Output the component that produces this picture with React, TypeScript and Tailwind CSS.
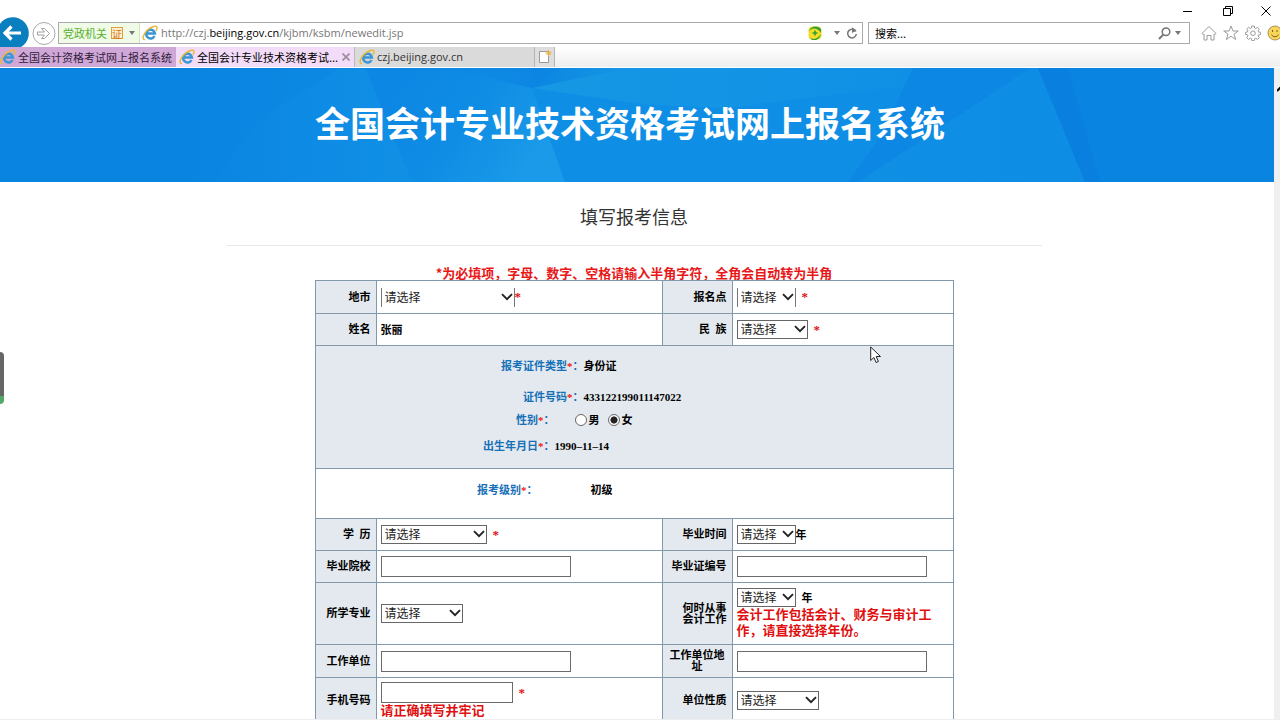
import type { ReactNode } from "react";

function IeIcon() {
  return (
    <svg viewBox="0 0 16 16" className="size-4 shrink-0" aria-hidden="true">
      <path d="M12.500 11A4.400 4.400 0 1 1 12.900 8.400H5" fill="none" stroke="#3a97d4" strokeWidth="2.500" />
      <path
        d="M2.400 14.600C-.4 14 1.600 8.500 5.800 4.800 9.500 1.600 14.200 .1 14.900 2c.3.9 0 2-.6 3.100"
        fill="none"
        stroke="#e9b93a"
        strokeWidth="1.500"
        strokeLinecap="round"
      />
    </svg>
  );
}

function Caret() {
  return (
    <svg viewBox="0 0 6 4" className="h-1 w-1.5 shrink-0" aria-hidden="true">
      <path d="M0 0h6L3 4z" fill="#777" />
    </svg>
  );
}

function Star() {
  return <span className="text-[13px] text-[#e01010]">*</span>;
}

function Select({ id, label, width, open = false }: { id: string; label: string; width: string; open?: boolean }) {
  return (
    <span className={`relative inline-flex shrink-0 ${width}`}>
      <select
        id={id}
        aria-label={label}
        className={`h-[19px] w-full appearance-none bg-white pb-px pl-[3px] font-['Noto_Sans_CJK_SC',sans-serif] text-[12px] leading-4 font-normal text-[#222] outline-none ${
          open ? "border-x border-[#777]" : "border border-[#666]"
        }`}
      >
        <option>请选择</option>
      </select>
      <svg viewBox="0 0 12 8" className="pointer-events-none absolute top-[5px] right-[2px] h-2 w-3" aria-hidden="true">
        <path d="M1 1.200l5 5 5-5" fill="none" stroke="#222" strokeWidth="1.900" />
      </svg>
    </span>
  );
}

function TextBox({ id, width }: { id: string; width: string }) {
  return <input id={id} type="text" className={`block h-[21px] border border-[#6b6b6b] bg-white px-1 text-[12px] ${width}`} />;
}

function LabelCell({ children, htmlFor, className = "text-right" }: { children: ReactNode; htmlFor?: string; className?: string }) {
  return (
    <th scope="row" className={`border border-[#8299ac] bg-[#e3e9ee] pr-[5px] pl-[5px] font-bold ${className}`}>
      <label htmlFor={htmlFor} className="block leading-[11px]">
        {children}
      </label>
    </th>
  );
}

function Cell({ children }: { children: ReactNode }) {
  return <td className="border border-[#8299ac] bg-white pl-1">{children}</td>;
}

function InfoRow({ label, height, labelWidth, children }: { label: string; height: string; labelWidth: string; children: ReactNode }) {
  return (
    <div className={`flex items-center ${height}`}>
      <span className={`text-right text-[#1670b8] ${labelWidth}`}>
        {label}
        <span className="text-[#f01010]">*</span>：
      </span>
      {children}
    </div>
  );
}

function Chrome() {
  return (
    <header className="shrink-0 font-['Noto_Sans_CJK_SC',sans-serif] text-[11px]">
      <div className="flex h-[22px] items-center justify-end pr-2">
        <button aria-label="最小化" className="w-10">
          <svg viewBox="0 0 10 10" className="mx-auto size-2.5"><path d="M0 5.500h9" stroke="#000" /></svg>
        </button>
        <button aria-label="还原" className="w-10">
          <svg viewBox="0 0 10 10" className="mx-auto size-2.5"><path d="M.5 2.500h7v7h-7zM2.500 2.500v-2h7v7h-2" fill="none" stroke="#000" /></svg>
        </button>
        <button aria-label="关闭" className="flex w-6 justify-center pl-3">
          <svg viewBox="0 0 10 10" className="size-2.5 shrink-0"><path d="M.5.5l9 9M9.500.5l-9 9" stroke="#000" /></svg>
        </button>
      </div>
      <div className="flex h-[25px] items-start">
        <button aria-label="后退" className="h-[25px] w-[30px] shrink-0">
          <svg viewBox="0 0 30 25" className="h-[25px] w-[30px] overflow-visible">
            <path d="M0 1.700A16 16 0 1 1 21 25H0z" fill="#0a7fc0" />
            <path d="M21 11H6M11.500 4.500L5 11l6.500 6.500" fill="none" stroke="#fff" strokeWidth="3.200" />
          </svg>
        </button>
        <button aria-label="前进" className="ml-[2px] h-6 w-6 shrink-0">
          <svg viewBox="0 0 24 24" className="size-6">
            <circle cx="12" cy="11.500" r="11" fill="#fff" stroke="#a8a8a8" />
            <path d="M5.500 10h7L9.500 6.500h3l5 5-5 5h-3l3-3.500h-7z" fill="#fff" stroke="#a0a0a0" />
          </svg>
        </button>
        <div className="ml-[2px] flex h-[22px] flex-1 items-center border border-[#aaa] bg-white">
          <div className="flex h-full shrink-0 items-center border-r border-[#cde8bb] bg-[#effbe6] pl-1 text-[#5aae2c]">
            党政机关
            <span className="ml-1 flex size-3 items-center justify-center border border-[#e0a040] bg-[#fdf0d0] text-[10px] text-[#d47a10]">证</span>
            <span className="mr-1 ml-1.5"><Caret /></span>
          </div>
          <span className="mr-[3px] ml-0.5"><IeIcon /></span>
          <span
            role="textbox"
            aria-label="地址"
            contentEditable
            suppressContentEditableWarning
            spellCheck={false}
            className="flex-1 font-['Open_Sans','Noto_Sans',sans-serif] text-[#777] outline-none"
          >
            http://czj.<span className="text-black">beijing.gov.cn</span>/kjbm/ksbm/newedit.jsp
          </span>
          <svg viewBox="0 0 14 14" className="mr-3 size-3.5" aria-hidden="true">
            <rect x="0.5" y="0.5" width="13" height="13" rx="4" fill="#f3dd26" />
            <path d="M1 5C3 0 9-1 13 3v4C10 2 5 1 1 5zM1 11c3 3 8 3 12-3-1 5-5 7-9 6z" fill="#2f9e35" />
            <path d="M7 4.500v5M4.500 7h5" stroke="#2f9e35" strokeWidth="1.600" />
          </svg>
          <Caret />
          <svg viewBox="0 0 12 12" className="mr-1 ml-1.5 size-3" aria-hidden="true">
            <path d="M9.800 4.500A4.300 4.300 0 1 0 10.300 7" fill="none" stroke="#777" strokeWidth="1.500" />
            <path d="M6 .2V6l4.500-2.500z" fill="#777" />
          </svg>
        </div>
        <div className="ml-[5px] flex h-[22px] w-1/4 max-w-[322px] shrink-0 grow items-center border border-[#aaa] bg-white pr-2">
          <input
            type="text"
            aria-label="搜索"
            placeholder="搜索..."
            className="min-w-0 flex-1 pl-1.5 leading-5 outline-none placeholder:text-black"
          />
          <svg viewBox="0 0 13 13" className="mr-1 size-[13px]" aria-hidden="true">
            <circle cx="8" cy="4.800" r="3.800" fill="none" stroke="#777" strokeWidth="1.500" />
            <path d="M5.200 7.600L1 12" stroke="#777" strokeWidth="2" />
          </svg>
          <Caret />
        </div>
        <div className="flex h-[22px] w-[90px] shrink-0 items-center gap-1.5 overflow-hidden pl-[11px]">
          <svg viewBox="0 0 16 16" className="size-4 shrink-0" aria-label="主页" fill="#fff" stroke="#9a9a9a">
            <path d="M1 8.500L8 1.500l7 7-1.300 1L13 9v6h-3v-4.500H6V15H3V9l-.7.500z" />
          </svg>
          <svg viewBox="0 0 16 16" className="size-4 shrink-0" aria-label="收藏" fill="#fff" stroke="#9a9a9a">
            <path d="M8 1l2 5h5.300L11 9.200l1.700 5.300L8 11.300l-4.700 3.200L5 9.200.7 6H6z" />
          </svg>
          <svg viewBox="0 0 16 16" className="size-4 shrink-0" aria-label="工具" fill="#fff" stroke="#9a9a9a">
            <path d="M6.700 1h2.600l.3 2 1.200.5 1.700-1.200 1.800 1.800-1.200 1.700.5 1.200 2 .3v2.100l-2 .3-.5 1.200 1.200 1.700-1.800 1.800-1.700-1.200-1.200.5-.3 2H6.700l-.3-2-1.200-.5-1.700 1.200-1.800-1.800 1.200-1.700-.5-1.200-2-.3V7.300l2-.3.5-1.200-1.200-1.700 1.800-1.800 1.700 1.200L6.400 3z" />
            <circle cx="8" cy="8.200" r="2.300" />
          </svg>
          <svg viewBox="0 0 16 16" className="size-4 shrink-0" aria-label="反馈">
            <circle cx="8" cy="8" r="7" fill="#f7d65a" stroke="#a8925a" />
            <path d="M5.500 5v2M10 5v2M4.500 9.500c1.500 3 5.500 3 7 0" fill="none" stroke="#806320" />
          </svg>
        </div>
      </div>
      <nav className="flex h-[21px] items-stretch border-b border-white bg-linear-to-b from-white to-[#eee] leading-5 whitespace-nowrap">
        <a href="#tab1" className="flex w-[176px] items-center gap-0.5 border-r border-[#c9a9cf] bg-[#d0a8d8] text-[#302038]">
          <IeIcon />全国会计资格考试网上报名系统
        </a>
        <a href="#tab2" className="flex w-[179px] items-center gap-0.5 border-r border-[#bbb] bg-[#f2dcf8] pl-[3px] text-black">
          <IeIcon />全国会计专业技术资格考试...
          <svg viewBox="0 0 8 8" className="mr-1 ml-auto size-2 shrink-0"><path d="M.5.5l7 7M7.500.5l-7 7" stroke="#998a9c" strokeWidth="1.600" /></svg>
        </a>
        <a href="#tab3" className="flex w-[180px] items-center gap-0.5 border-r border-[#b5b5b5] bg-[#dadada] pl-1 font-['Open_Sans','Noto_Sans',sans-serif] text-[#333]">
          <IeIcon />czj.beijing.gov.cn
        </a>
        <button aria-label="新建标签页" className="flex w-5 items-center justify-center border-r border-[#b5b5b5] bg-[#dedede]">
          <svg viewBox="0 0 14 14" className="size-3.5">
            <path d="M1.500 1.500h9v11h-9z" fill="#fff" stroke="#999" />
            <path d="M10.500 0v6M7.500 3h6M8.500 1l4 4M12.500 1l-4 4" stroke="#e5ae3c" />
          </svg>
        </button>
      </nav>
    </header>
  );
}

function Banner() {
  return (
    <div className="relative flex h-[114px] items-center justify-center bg-[#0a84e1] pr-[14px]">
      <svg viewBox="0 0 1274 114" preserveAspectRatio="none" className="absolute inset-0 size-full" aria-hidden="true">
        <defs>
          <linearGradient id="glow" x1="0" x2="1" y1="0" y2="0">
            <stop offset="0" stopColor="#0a84e1" />
            <stop offset="0.18" stopColor="#0f8de5" />
            <stop offset="0.25" stopColor="#1090e5" />
            <stop offset="0.5" stopColor="#1090e5" />
            <stop offset="1" stopColor="#0e8de4" />
          </linearGradient>
          <linearGradient id="facet" x1="0" x2="1" y1="0" y2="0.4">
            <stop offset="0.2" stopColor="#0c87e3" />
            <stop offset="0.6" stopColor="#0f8de5" />
            <stop offset="1" stopColor="#1a9ae8" />
          </linearGradient>
          <linearGradient id="sheen" x1="0" x2="1" y1="0" y2="0">
            <stop offset="0" stopColor="#1698e4" />
            <stop offset="1" stopColor="#1090e5" />
          </linearGradient>
          <linearGradient id="wedge" x1="0" x2="1" y1="0" y2="0">
            <stop offset="0" stopColor="#0a82e1" stopOpacity="0" />
            <stop offset="0.5" stopColor="#0a82e1" stopOpacity="0.8" />
            <stop offset="1" stopColor="#0a82e1" stopOpacity="0" />
          </linearGradient>
        </defs>
        <path d="M190 0h848l47 114H190z" fill="url(#glow)" />
        <path d="M190 0h150L260 50l-50 64h-20z" fill="#0a84e1" opacity="0.4" />
        <path d="M365 0h165l2 20 33 94H412z" fill="url(#facet)" />
        <path d="M532 20l108 14 273-34-50 114H565z" fill="#0f8ee6" />
        <path d="M560 0h353l-8 18-180 22-85-4-108-16z" fill="url(#sheen)" />
        <path d="M445 0h185L532 20z" fill="url(#wedge)" />
        <path d="M913 0h117L858 114h-10l32-44z" fill="#0c87e3" />
        <path d="M1038 0h30l32 114h-15z" fill="#087de0" opacity="0.7" />
      </svg>
      <h1 className="relative pb-1.5 text-[35px] leading-[48px] font-bold whitespace-nowrap text-white">全国会计专业技术资格考试网上报名系统</h1>
    </div>
  );
}

export default function App() {
  return (
    <div className="relative flex h-screen flex-col overflow-hidden bg-white font-['Noto_Sans_CJK_SC',sans-serif]">
      <Chrome />
      <div className="flex min-h-0 flex-1">
        <main className="min-w-0 flex-1 overflow-hidden">
          <Banner />
          <div className="pr-[6px]">
            <div className="mx-auto flex w-full max-w-[815px] flex-col items-center">
              <h2 className="w-full border-b border-[#e8e8e8] pt-5 pb-[15px] text-center text-[18px] leading-7 text-[#333]">填写报考信息</h2>
              <p className="pt-[19px] text-[13px] leading-[15px] font-bold text-[#e81818]">
                *为必填项，字母、数字、空格请输入半角字符，全角会自动转为半角
              </p>
              <table className="w-[639px] table-fixed border-collapse font-['Liberation_Serif','Noto_Sans_CJK_SC',serif] text-[11px] leading-4 font-bold text-black">
                <colgroup>
                  <col className="w-[61px]" />
                  <col />
                  <col className="w-[70px]" />
                  <col className="w-[221px]" />
                </colgroup>
                <tbody>
                  <tr className="h-[33px]">
                    <LabelCell htmlFor="city">地市</LabelCell>
                    <Cell><div className="flex items-center"><Select id="city" label="地市" width="w-[134px]" open /><Star /></div></Cell>
                    <LabelCell htmlFor="site">报名点</LabelCell>
                    <Cell><div className="flex items-center gap-1.5"><Select id="site" label="报名点" width="w-[59px]" open /><Star /></div></Cell>
                  </tr>
                  <tr className="h-8">
                    <LabelCell>姓名</LabelCell>
                    <Cell>张丽</Cell>
                    <LabelCell htmlFor="nation">民&nbsp; 族</LabelCell>
                    <Cell><div className="flex items-center gap-1.5"><Select id="nation" label="民族" width="w-[71px]" /><Star /></div></Cell>
                  </tr>
                  <tr className="h-[123px]">
                    <td colSpan={4} className="border border-[#8299ac] bg-[#e3e9ee] p-0">
                      <InfoRow label="报考证件类型" height="h-8" labelWidth="w-[268px]">身份证</InfoRow>
                      <InfoRow label="证件号码" height="h-[30px]" labelWidth="w-[268px]">433122199011147022</InfoRow>
                      <InfoRow label="性别" height="h-4" labelWidth="w-[239px]">
                        <label className="ml-5 flex items-center gap-0.5">
                          <input type="radio" name="sex" className="size-3 appearance-none rounded-full border border-[#666] bg-white" />男
                        </label>
                        <label className="ml-2 flex items-center gap-0.5">
                          <input
                            type="radio"
                            name="sex"
                            defaultChecked
                            className="size-3 appearance-none rounded-full border border-[#666] bg-white checked:bg-radial checked:from-[#222] checked:from-45% checked:to-white checked:to-55%"
                          />女
                        </label>
                      </InfoRow>
                      <InfoRow label="出生年月日" height="h-9" labelWidth="w-[239px]">1990–11–14</InfoRow>
                    </td>
                  </tr>
                  <tr className="h-[50px]">
                    <td colSpan={4} className="border border-[#8299ac] bg-white p-0 pb-2">
                      <InfoRow label="报考级别" height="h-4" labelWidth="w-[222px]"><span className="ml-[53px]">初级</span></InfoRow>
                    </td>
                  </tr>
                  <tr className="h-8">
                    <LabelCell htmlFor="degree">学&nbsp; 历</LabelCell>
                    <Cell><div className="flex items-center gap-1.5"><Select id="degree" label="学历" width="w-[106px]" /><Star /></div></Cell>
                    <LabelCell htmlFor="gradyear">毕业时间</LabelCell>
                    <Cell><div className="flex items-center"><Select id="gradyear" label="毕业时间" width="w-[59px]" />年</div></Cell>
                  </tr>
                  <tr className="h-8">
                    <LabelCell htmlFor="school">毕业院校</LabelCell>
                    <Cell><TextBox id="school" width="w-[190px]" /></Cell>
                    <LabelCell htmlFor="certno">毕业证编号</LabelCell>
                    <Cell><TextBox id="certno" width="w-[190px]" /></Cell>
                  </tr>
                  <tr className="h-[62px]">
                    <LabelCell htmlFor="major">所学专业</LabelCell>
                    <Cell><div className="flex"><Select id="major" label="所学专业" width="w-[82px]" /></div></Cell>
                    <LabelCell htmlFor="since">何时从事<br />会计工作</LabelCell>
                    <Cell>
                      <div className="flex items-center gap-1.5"><Select id="since" label="何时从事会计工作" width="w-[59px]" />年</div>
                      <p className="w-[196px] text-[13px] leading-4 text-[#e01010]">会计工作包括会计、财务与审计工作，请直接选择年份。</p>
                    </Cell>
                  </tr>
                  <tr className="h-[33px]">
                    <LabelCell htmlFor="employer">工作单位</LabelCell>
                    <Cell><TextBox id="employer" width="w-[190px]" /></Cell>
                    <LabelCell htmlFor="address" className="text-center">工作单位地址</LabelCell>
                    <Cell><TextBox id="address" width="w-[190px]" /></Cell>
                  </tr>
                  <tr className="h-[46px]">
                    <LabelCell htmlFor="mobile">手机号码</LabelCell>
                    <Cell>
                      <div className="flex items-center gap-1.5"><TextBox id="mobile" width="w-[132px]" /><Star /></div>
                      <p className="text-[13px] leading-4 text-[#e01010]">请正确填写并牢记</p>
                    </Cell>
                    <LabelCell htmlFor="kind">单位性质</LabelCell>
                    <Cell><div className="flex"><Select id="kind" label="单位性质" width="w-[82px]" /></div></Cell>
                  </tr>
                </tbody>
              </table>
            </div>
          </div>
        </main>
        <aside className="w-1.5 shrink-0 overflow-hidden bg-[#f0f0f0] pt-4 pl-[3px]">
          <svg viewBox="0 0 12 8" className="h-2 w-3"><path d="M0 7l6-6 6 6" fill="none" stroke="#000" strokeWidth="2" /></svg>
        </aside>
      </div>
      <div className="h-px shrink-0 bg-[#eee]" />
      <div className="absolute top-[352px] left-0 h-[52px] w-1 rounded-r-sm border-b-8 border-[#55a868] bg-[#666]" />
      <svg viewBox="0 0 12 18" className="absolute top-[346px] left-[870px] h-[18px] w-3" aria-hidden="true">
        <path d="M.7 1v13.500l3.200-3 2.200 5 2.300-1-2.200-5h4.300z" fill="#fff" stroke="#222" />
      </svg>
    </div>
  );
}
